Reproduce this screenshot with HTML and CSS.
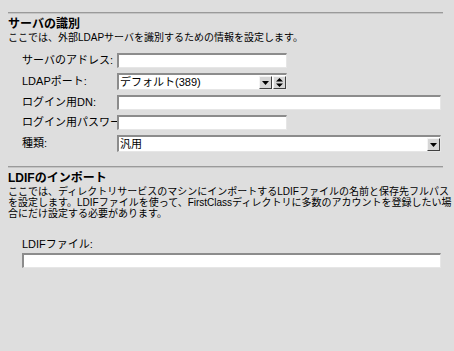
FILE: index.html
```html
<!DOCTYPE html>
<html lang="ja">
<head>
<meta charset="utf-8">
<link rel="stylesheet" href="styles.css">
</head>
<body>
<div class="page">
  <div class="rule first"></div>
  <h2 class="title">サーバの識別</h2>
  <p class="desc">ここでは、外部LDAPサーバを識別するための情報を設定します。</p>
  <div class="form">
    <span class="label">サーバのアドレス:</span>
    <div class="field short"></div>
    <span class="label">LDAPポート:</span>
    <div class="field short select">
      <span class="value">デフォルト(389)</span>
      <span class="btn"><svg width="9" height="9" viewBox="0 0 9 9"><path d="M1 3h7L4.5 7z" fill="#000"/></svg></span>
      <span class="btn spin"><svg width="9" height="11" viewBox="0 0 9 11"><path d="M4.5 1L8 4.5H1z M1 6.5h7L4.5 10z" fill="#000"/></svg></span>
    </div>
    <span class="label">ログイン用DN:</span>
    <div class="field long"></div>
    <span class="label">ログイン用パスワー</span>
    <div class="field short"></div>
    <span class="label">種類:</span>
    <div class="field long select">
      <span class="value">汎用</span>
      <span class="btn"><svg width="9" height="9" viewBox="0 0 9 9"><path d="M1 3h7L4.5 7z" fill="#000"/></svg></span>
    </div>
  </div>
  <div class="rule second"></div>
  <h2 class="title">LDIFのインポート</h2>
  <p class="desc">ここでは、ディレクトリサービスのマシンにインポートするLDIFファイルの名前と保存先フルパス<br>を設定します。LDIFファイルを使って、FirstClassディレクトリに多数のアカウントを登録したい場<br>合にだけ設定する必要があります。</p>
  <div class="file">
    <span class="label">LDIFファイル:</span>
    <div class="field wide"></div>
  </div>
</div>
</body>
</html>
```
FILE: styles.css
```css
html, body {
  margin: 0;
  padding: 0;
  background: #dedede;
}
body {
  font-family: "Liberation Sans", "Noto Sans CJK JP", sans-serif;
  color: #000;
  width: 454px;
  height: 351px;
  overflow: hidden;
}
.page {
  padding: 0 11px 0 8px;
}
.rule {
  height: 1px;
  background: #9a9a9a;
  border-bottom: 1px solid #c4c4c4;
}
.rule.first { margin-top: 12px; }
.rule.second { margin-top: 14px; }
.title {
  margin: 3px 0 0 0;
  font-size: 12px;
  line-height: 14px;
  font-weight: bold;
}
.desc {
  margin: 1px 0 0 0;
  font-size: 10px;
  line-height: 11px;
  white-space: nowrap;
}
.form {
  display: grid;
  grid-template-columns: 95px 1fr;
  row-gap: 5px;
  margin: 10px 0 0 14px;
  align-items: center;
}
.label {
  font-size: 11px;
  line-height: 15px;
  white-space: nowrap;
  overflow: visible;
}
.field {
  box-sizing: border-box;
  height: 15px;
  background: #fff;
  border-style: solid;
  border-width: 2px 1px 1px 2px;
  border-color: #8c8c8c #e6e6e6 #e6e6e6 #8c8c8c;
  display: flex;
  align-items: center;
}
.field.short { width: 170px; }
.field.long { width: 324px; }
.field.select { height: 17px; }
.value {
  flex: 1;
  font-size: 11px;
  line-height: 13px;
  padding-left: 1px;
}
.btn {
  box-sizing: border-box;
  width: 13px;
  height: 13px;
  background: #d6d6d6;
  border-style: solid;
  border-width: 1px;
  border-color: #f4f4f4 #404040 #404040 #f4f4f4;
  display: flex;
  align-items: center;
  justify-content: center;
}
.btn.spin { margin-left: 1px; }
.file {
  margin: 18px 0 0 14px;
  display: flex;
  flex-direction: column;
  gap: 1px;
}
.field.wide { width: 419px; }
```
